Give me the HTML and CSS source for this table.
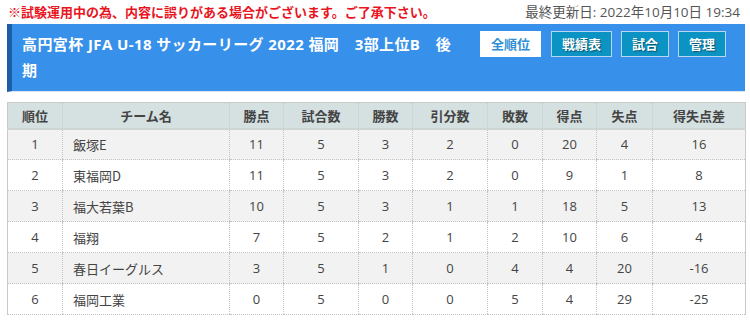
FILE: index.html
```html
<!DOCTYPE html>
<html lang="ja">
<head>
<meta charset="utf-8">
<link rel="stylesheet" href="styles.css">
</head>
<body>
<div class="topline">
  <span class="notice">※試験運用中の為、内容に誤りがある場合がございます。ご了承下さい。</span>
  <span class="updated">最終更新日: 2022年10月10日 19:34</span>
</div>
<div class="banner">
  <h1 class="title">高円宮杯 JFA U-18 サッカーリーグ 2022 福岡　3部上位B　後期</h1>
  <div class="buttons">
    <a class="btn btn-active">全順位</a>
    <a class="btn">戦績表</a>
    <a class="btn">試合</a>
    <a class="btn">管理</a>
  </div>
</div>
<table class="standings">
  <colgroup>
    <col class="c-rank"><col class="c-team"><col class="c-pts"><col class="c-gp"><col class="c-w"><col class="c-d"><col class="c-l"><col class="c-gf"><col class="c-ga"><col class="c-gd">
  </colgroup>
  <thead>
    <tr><th>順位</th><th>チーム名</th><th>勝点</th><th>試合数</th><th>勝数</th><th>引分数</th><th>敗数</th><th>得点</th><th>失点</th><th>得失点差</th></tr>
  </thead>
  <tbody>
    <tr><td>1</td><td class="team">飯塚E</td><td>11</td><td>5</td><td>3</td><td>2</td><td>0</td><td>20</td><td>4</td><td>16</td></tr>
    <tr><td>2</td><td class="team">東福岡D</td><td>11</td><td>5</td><td>3</td><td>2</td><td>0</td><td>9</td><td>1</td><td>8</td></tr>
    <tr><td>3</td><td class="team">福大若葉B</td><td>10</td><td>5</td><td>3</td><td>1</td><td>1</td><td>18</td><td>5</td><td>13</td></tr>
    <tr><td>4</td><td class="team">福翔</td><td>7</td><td>5</td><td>2</td><td>1</td><td>2</td><td>10</td><td>6</td><td>4</td></tr>
    <tr><td>5</td><td class="team">春日イーグルス</td><td>3</td><td>5</td><td>1</td><td>0</td><td>4</td><td>4</td><td>20</td><td>-16</td></tr>
    <tr><td>6</td><td class="team">福岡工業</td><td>0</td><td>5</td><td>0</td><td>0</td><td>5</td><td>4</td><td>29</td><td>-25</td></tr>
  </tbody>
</table>
</body>
</html>
```
FILE: styles.css
```css
* { box-sizing: border-box; }
body {
  margin: 0;
  padding: 0 5px 0 7px;
  font-family: "Open Sans", "Noto Sans CJK JP", sans-serif;
  font-size: 13px;
  color: #444;
  background: #fff;
}
.topline {
  display: flex;
  justify-content: space-between;
  align-items: center;
  height: 22px;
  padding: 0 5px 0 1px;
}
.notice {
  color: #e8141e;
  font-weight: bold;
  font-family: "Noto Sans CJK JP", sans-serif;
}
.updated {
  color: #555;
  font-size: 13.5px;
  font-family: "Open Sans", "Noto Sans CJK JP", sans-serif;
}
.banner {
  margin-top: 2px;
  display: flex;
  align-items: flex-start;
  background: #3790ea;
  border-left: 5px solid #1b5da6;
  border-bottom: 1px solid #d9e4ee;
  padding: 7px 19px 8px 10px;
  height: 68px;
}
.title {
  margin: 0;
  width: 436px;
  color: #fff;
  font-size: 15px;
  font-weight: bold;
  line-height: 26px;
  letter-spacing: 0.4px;
  font-family: "Open Sans", "Noto Sans CJK JP", sans-serif;
}
.buttons {
  margin-left: auto;
  display: flex;
  gap: 9px;
  padding-top: 0;
}
.btn {
  display: block;
  height: 26px;
  line-height: 24px;
  padding: 0 10px;
  border: 1px solid #b9d6ef;
  background: #0b93c4;
  color: #fff;
  font-weight: bold;
  font-size: 13px;
  text-shadow: 1px 1px 1px rgba(0,0,0,0.45);
  font-family: "Noto Sans CJK JP", sans-serif;
}
.btn-active {
  background: #fff;
  color: #2f8fd6;
  border-color: #fff;
  text-shadow: none;
  margin-right: 1px;
}
.standings {
  margin-top: 10px;
  width: 738px;
  border-collapse: collapse;
  table-layout: fixed;
  border-left: 1px solid #c9c9c9;
  border-right: 1px solid #c9c9c9;
  border-top: 1px solid #c9c9c9;
}
.c-rank { width: 55px; }
.c-team { width: 167px; }
.c-pts { width: 54px; }
.c-gp { width: 75px; }
.c-w { width: 54px; }
.c-d { width: 75px; }
.c-l { width: 55px; }
.c-gf { width: 54px; }
.c-ga { width: 56px; }
.c-gd { width: 93px; }
.standings th {
  background: #d5e0e1;
  height: 26px;
  font-weight: bold;
  color: #444;
  border-left: 1px dotted #c4cccc;
  border-bottom: 2px solid #cfd4d4;
  padding: 0;
  font-family: "Noto Sans CJK JP", sans-serif;
}
.standings th:first-child { border-left: none; }
.standings td {
  height: 31px;
  text-align: center;
  padding: 0;
  border-left: 1px dotted #c4c4c4;
  border-bottom: 1px dotted #c4c4c4;
  color: #444;
}
.standings td:first-child { border-left: none; }
.standings td.team {
  text-align: left;
  padding-left: 10px;
  font-family: "Noto Sans CJK JP", sans-serif;
}
.standings tbody tr:nth-child(odd) td { background: #f2f2f2; }
.standings tbody tr:nth-child(even) td { background: #fff; }
```
